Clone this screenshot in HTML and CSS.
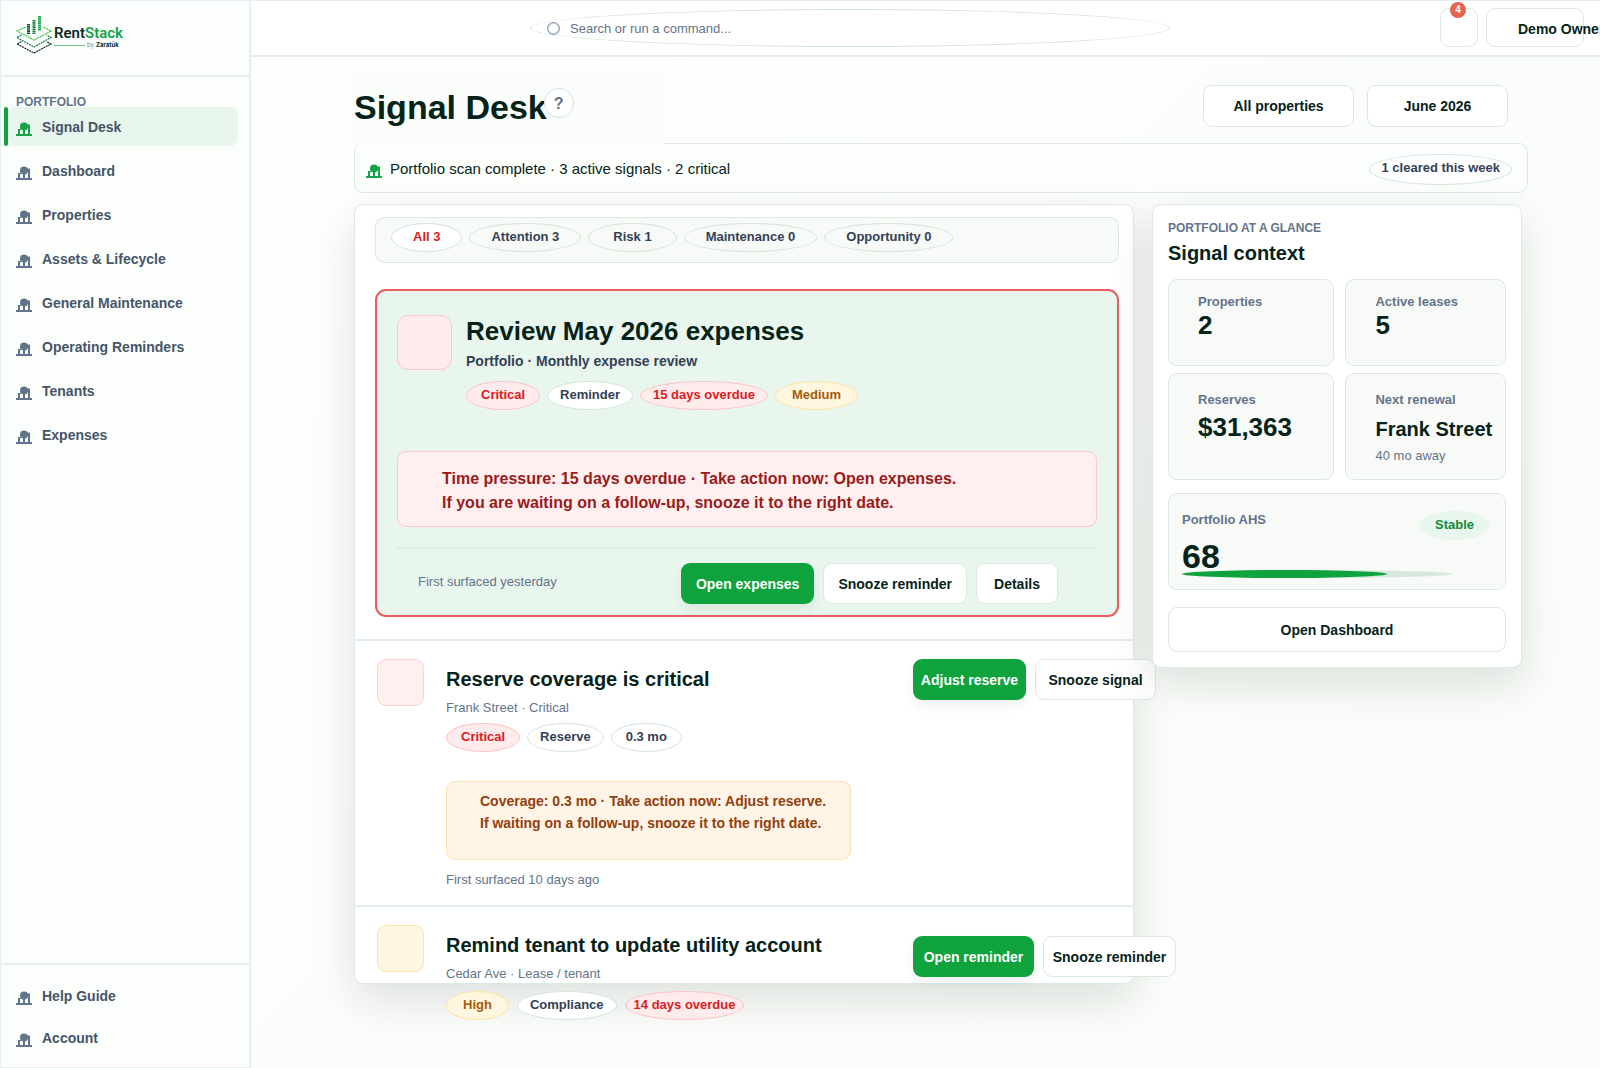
FILE: index.html
```html
<!DOCTYPE html>
<html lang="en">
<head>
<meta charset="utf-8">
<meta name="viewport" content="width=device-width, initial-scale=1">
<title>RentStack – Signal Desk</title>
<link rel="stylesheet" href="styles.css">
</head>
<body>
<svg class="defs" aria-hidden="true">
  <symbol id="home" viewBox="0 0 16 14">
    <path d="M0 12h16v2H0zM2 7h2v5H2zM11 2.500h3V12h-2V6h-1zM7 8h2v5H7z"/>
    <circle cx="8" cy="4.500" r="4"/>
    <path d="M3 7h2v1H3z"/>
  </symbol>
</svg>
<div class="app">
  <aside class="sidebar">
    <a class="brand" href="#">
      <svg class="brand-mark" width="36" height="38" viewBox="0 0 36 38" fill="none" stroke-width="1.200" aria-hidden="true">
        <g stroke-width="3" stroke-dasharray="1.600 .5">
          <path d="M12.500 8v10" stroke="#0b5a35"/><path d="M18 4v14" stroke="#15803d"/><path d="M23.500 0v15" stroke="#16a34a"/>
        </g>
        <g stroke-dasharray="2 .7">
          <path d="M9.500 11L1 15l17 9L35 15l-8-4" stroke="#3fc04a"/>
          <path d="M5.500 19L1 21.500 18 31l17-9.500L30.500 19" stroke="#1c7a4b"/>
          <path d="M5.500 25.500L1 28l17 9 17-9-4.500-2.500" stroke="#10302a"/>
        </g>
      </svg>
      <span class="brand-text">
        <span class="brand-name">Rent<b>Stack</b></span>
        <span class="brand-by"><i></i>by <b>Zaratük</b></span>
      </span>
    </a>
    <nav class="nav" aria-label="Portfolio">
      <h2 class="eyebrow nav-title">PORTFOLIO</h2>
      <a class="nav-item active" href="#"><svg class="home"><use href="#home"/></svg>Signal Desk</a>
      <a class="nav-item" href="#"><svg class="home"><use href="#home"/></svg>Dashboard</a>
      <a class="nav-item" href="#"><svg class="home"><use href="#home"/></svg>Properties</a>
      <a class="nav-item" href="#"><svg class="home"><use href="#home"/></svg>Assets &amp; Lifecycle</a>
      <a class="nav-item" href="#"><svg class="home"><use href="#home"/></svg>General Maintenance</a>
      <a class="nav-item" href="#"><svg class="home"><use href="#home"/></svg>Operating Reminders</a>
      <a class="nav-item" href="#"><svg class="home"><use href="#home"/></svg>Tenants</a>
      <a class="nav-item" href="#"><svg class="home"><use href="#home"/></svg>Expenses</a>
    </nav>
    <nav class="nav nav-foot" aria-label="Support">
      <a class="nav-item" href="#"><svg class="home"><use href="#home"/></svg>Help Guide</a>
      <a class="nav-item" href="#"><svg class="home"><use href="#home"/></svg>Account</a>
    </nav>
  </aside>

  <div class="page">
    <header class="topbar">
      <label class="search"><span class="search-icon"></span><input type="search" placeholder="Search or run a command..." aria-label="Search or run a command"></label>
      <div class="top-actions">
        <button class="btn bell" aria-label="Notifications"><span class="badge">4</span></button>
        <button class="btn user">Demo Owner</button>
      </div>
    </header>

    <main class="content">
      <div class="heading">
        <div class="title-block"><h1>Signal Desk</h1><button class="help" aria-label="Help">?</button></div>
        <div class="filters-top">
          <button class="btn btn-property">All properties</button>
          <button class="btn btn-month">June 2026</button>
        </div>
      </div>

      <section class="status">
        <svg class="home green"><use href="#home"/></svg>
        <p>Portfolio scan complete · 3 active signals · 2 critical</p>
        <span class="pill pill-cleared">1 cleared this week</span>
      </section>

      <div class="columns">
        <section class="card feed">
          <div class="filter-bar">
            <button class="pill filter selected">All 3</button>
            <button class="pill filter">Attention 3</button>
            <button class="pill filter filter-roomy">Risk 1</button>
            <button class="pill filter">Maintenance 0</button>
            <button class="pill filter">Opportunity 0</button>
          </div>

          <article class="hero">
            <div class="hero-head">
              <div class="tile-icon tile-lg red"></div>
              <div>
                <h2>Review May 2026 expenses</h2>
                <p class="hero-sub">Portfolio · Monthly expense review</p>
                <div class="tags">
                  <span class="pill red">Critical</span><span class="pill pill-snug">Reminder</span><span class="pill red pill-snug">15 days overdue</span><span class="pill amber pill-roomy">Medium</span>
                </div>
              </div>
            </div>
            <p class="alert alert-red">Time pressure: 15 days overdue · Take action now: Open expenses.<br>If you are waiting on a follow-up, snooze it to the right date.</p>
            <footer class="hero-foot">
              <span class="muted">First surfaced yesterday</span>
              <div class="actions">
                <button class="btn primary">Open expenses</button>
                <button class="btn">Snooze reminder</button>
                <button class="btn btn-details">Details</button>
              </div>
            </footer>
          </article>

          <article class="row">
            <div class="tile-icon"></div>
            <div class="row-body">
              <h3>Reserve coverage is critical</h3>
              <p class="muted row-sub">Frank Street · Critical</p>
              <div class="tags">
                <span class="pill red">Critical</span><span class="pill pill-snug">Reserve</span><span class="pill">0.3 mo</span>
              </div>
              <p class="alert alert-amber">Coverage: 0.3 mo · Take action now: Adjust reserve.<br>If waiting on a follow-up, snooze it to the right date.</p>
              <p class="muted row-time">First surfaced 10 days ago</p>
            </div>
            <div class="actions">
              <button class="btn primary btn-adjust">Adjust reserve</button>
              <button class="btn btn-signal">Snooze signal</button>
            </div>
          </article>

          <article class="row row-last">
            <div class="tile-icon amber"></div>
            <div class="row-body">
              <h3>Remind tenant to update utility account</h3>
              <p class="muted row-sub">Cedar Ave · Lease / tenant</p>
              <div class="tags">
                <span class="pill amber pill-roomy">High</span><span class="pill pill-snug">Compliance</span><span class="pill red pill-tight">14 days overdue</span>
              </div>
            </div>
            <div class="actions">
              <button class="btn primary btn-open">Open reminder</button>
              <button class="btn btn-remind">Snooze reminder</button>
            </div>
          </article>
        </section>

        <aside class="card glance">
          <p class="eyebrow">PORTFOLIO AT A GLANCE</p>
          <h3>Signal context</h3>
          <div class="stats">
            <div class="stat"><span class="label">Properties</span><strong>2</strong></div>
            <div class="stat"><span class="label">Active leases</span><strong>5</strong></div>
            <div class="stat stat-tall"><span class="label">Reserves</span><strong>$31,363</strong></div>
            <div class="stat stat-tall"><span class="label">Next renewal</span><strong class="place">Frank Street</strong><span class="muted">40 mo away</span></div>
          </div>
          <div class="ahs">
            <div class="ahs-head"><span class="label">Portfolio AHS</span><span class="pill stable">Stable</span></div>
            <strong>68</strong>
            <div class="meter"><div class="meter-fill" style="width:76%"></div></div>
          </div>
          <button class="btn btn-dashboard">Open Dashboard</button>
        </aside>
      </div>
    </main>
  </div>
</div>
</body>
</html>
```
FILE: styles.css
```css
:root {
  --line: #e6f0ea;
  --edge: #dbeae1;
  --oval: #d3e6da;
  --ink: #06231a;
  --slate: #334155;
  --muted: #64748b;
  --green: #0fa33e;
}
* { box-sizing: border-box; }
body, h1, h2, h3, p { margin: 0; }
body {
  font: 14px/20px "Liberation Sans", Arial, sans-serif;
  color: var(--ink);
  background: linear-gradient(135deg, #fefdff 20%, #fafdf9 70%, #f9fcf8);
}
a { color: inherit; text-decoration: none; }
button, input { font: inherit; color: inherit; }
.defs { position: absolute; width: 0; height: 0; }
.app { display: grid; grid-template-columns: 251px minmax(0, 1fr); min-height: 100vh; }

/* Sidebar */
.sidebar {
  display: flex; flex-direction: column;
  background: #fbfefb;
  border: 1px solid var(--line); border-right-width: 2px;
}
.brand {
  display: flex; gap: 2px; height: 76px;
  padding: 15px 0 0 15px;
  border-bottom: 2px solid var(--line);
}
.brand-text { padding-top: 7px; }
.brand-name { display: block; font: 600 15px/20px Roboto, sans-serif; color: #0b2a22; }
.brand-name b { font-weight: 600; color: #16a34a; }
.brand-by { display: flex; align-items: center; gap: 2px; margin-top: -2px; font: 6px/8px Inter, sans-serif; color: #7c8b96; }
.brand-by i { width: 31px; height: 1px; background: #6cc48a; }
.brand-by b { color: #0b2a22; }
.eyebrow { font-size: 12px; line-height: 14px; font-weight: 700; color: var(--muted); }
.nav { display: grid; gap: 5px; padding: 0 11px 0 7px; }
.nav-title { margin: 18px 0 -7px 8px; }
.nav-item {
  position: relative;
  display: flex; align-items: center; gap: 10px;
  height: 39px; padding: 1px 8px 0;
  border-radius: 8px;
  font-weight: 700; color: #475569;
}
.nav-item.active { background: #e9f6ed; }
.nav-item.active::before {
  content: ""; position: absolute; left: -4px; top: 0; bottom: 0;
  width: 4px; border-radius: 2px; background: var(--green);
}
.home { width: 16px; height: 14px; margin-top: 4px; fill: #64748b; }
.active .home, .home.green { fill: #16a34a; }
.nav-foot { margin-top: auto; gap: 3px; padding-top: 11px; padding-bottom: 10px; border-top: 2px solid var(--line); }

/* Top bar */
.topbar {
  display: flex; justify-content: space-between; gap: 16px;
  height: 57px; padding: 7px 16px 0 279px; overflow: hidden;
  background: #fff;
  border-top: 1px solid var(--line); border-bottom: 2px solid var(--line);
}
.search {
  flex: 0 1 640px; display: flex; align-items: center; gap: 10px;
  height: 38px; margin-top: 1px; padding-left: 16px;
  border: 1px solid var(--oval); border-radius: 50%;
}
.search-icon { width: 13px; height: 13px; border: 1px solid #7d8bab; border-radius: 50%; outline: 1px solid #c3cad9; outline-offset: -2px; }
.search input { flex: 1; border: 0; padding: 2px 0 0; background: none; outline: 0; font-size: 13px; }
.search input::placeholder { color: var(--muted); opacity: 1; }
.top-actions { display: flex; gap: 8px; }

.btn {
  height: 41px; padding: 0 14px;
  background: #fff; border: 1px solid var(--edge); border-radius: 9px;
  font-weight: 700; white-space: nowrap; cursor: pointer;
}
.btn.primary {
  padding: 0 15px; border: 0;
  background: var(--green); color: #fff;
  box-shadow: 0 6px 12px rgba(10, 40, 25, .06);
}
.top-actions .btn { height: 39px; }
.bell { position: relative; width: 38px; padding: 0; }
.badge {
  position: absolute; left: 9px; top: -7px;
  width: 16px; height: 16px; border-radius: 50%;
  background: #e5644e; color: #fff; font-size: 10px; line-height: 16px;
}
.user { width: 98px; padding: 2px 0 0 31px; text-align: left; }

/* Page head */
.content { padding: 15px 72px 0 103px; }
.heading { display: flex; justify-content: space-between; padding-right: 20px; }
.title-block {
  position: relative; z-index: 1;
  display: flex; align-items: flex-start;
  width: 310px; height: 74px; padding-top: 15px;
  background: #fbfdfb;
}
h1 { font-size: 34px; line-height: 40px; }
.help {
  width: 30px; height: 30px; margin: 1px 0 0 -3px; padding: 2px 0 0;
  border: 1px solid var(--oval); border-radius: 50%;
  background: #fff; color: var(--muted); font-size: 16px; font-weight: 700;
}
.filters-top { display: flex; gap: 13px; padding-top: 13px; }
.filters-top .btn { height: 42px; }
.btn-property { width: 151px; }
.btn-month { width: 141px; }
.status {
  display: flex; align-items: center; gap: 8px;
  height: 50px; margin-top: -3px; padding: 2px 15px 0 11px;
  background: #fbfefb; border: 1px solid var(--edge); border-radius: 9px;
}
.status p { flex: 1; font-size: 15px; }

.pill {
  display: inline-block; height: 29px; padding: 0 14px;
  border: 1px solid var(--oval); border-radius: 50%;
  background: #fff; color: var(--slate);
  font-size: 13px; line-height: 26px; font-weight: 700; white-space: nowrap;
}
.pill-cleared { height: 31px; padding: 0 11px; }
.pill.red { background: #ffebec; border-color: #fbc4c6; color: #dc1c24; }
.pill.amber { background: #fff6e0; border-color: #fde4a8; color: #a85c08; }
.pill.pill-roomy { padding: 0 16px; }
.pill.pill-snug { padding: 0 12px; }
.pill.pill-tight { padding: 0 8px; }
.pill.stable { padding: 0 15px; border-color: #e9f6ed; background: #e9f6ed; color: #118a3a; }
.tags { display: flex; gap: 7px; }

/* Feed */
.columns {
  display: grid; grid-template-columns: minmax(0, 1fr) 370px; gap: 18px;
  align-items: start; padding-right: 6px; margin-top: 11px;
}
.card {
  background: #fff; border: 1px solid var(--edge); border-radius: 9px;
  box-shadow: 0 16px 44px rgba(10, 25, 18, .12);
}
.feed { padding-top: 12px; }
.filter-bar {
  display: flex; gap: 7px; height: 46px;
  margin: 0 14px 26px 20px; padding: 5px 15px;
  background: #f8faf8; border: 1px solid var(--edge); border-radius: 9px;
}
.filter { padding: 0 21px 2px; background: none; cursor: pointer; }
.filter-roomy { padding: 0 24px 2px; }
.filter.selected { background: #fff; color: #dc1c24; }
.hero {
  margin: 0 14px 22px 20px; padding: 24px 20px 11px;
  background: #e9f6ed; border: 2px solid #e85d5f; border-radius: 11px;
}
.hero-head { display: flex; gap: 14px; }
.tile-icon { width: 47px; height: 47px; border: 1px solid #fdd0d2; border-radius: 9px; background: #ffefef; }
.tile-lg { width: 55px; height: 55px; border-radius: 11px; }
.tile-icon.red { background: #ffebec; border-color: #fbc8ca; }
.tile-icon.amber { background: #fff6e0; border-color: #fde2aa; }
.hero h2 { font-size: 26px; line-height: 32px; }
.hero-sub { margin: 4px 0 10px; font-weight: 700; color: var(--slate); }
.alert { border: 1px solid; border-radius: 9px; font-weight: 700; }
.alert-red {
  margin-top: 41px; padding: 15px 44px 11px;
  background: #fff0ef; border-color: #fbc8ca; color: #991b1b;
  font-size: 16px; line-height: 24px;
}
.muted { font-size: 13px; color: var(--muted); }
.hero-foot {
  display: flex; justify-content: space-between; align-items: center;
  margin-top: 20px; padding: 14px 39px 0 21px;
  border-top: 2px solid #deeee4;
}
.hero-foot .muted { padding-bottom: 4px; }
.actions { display: flex; gap: 9px; }
.btn-details { width: 82px; }
.row {
  display: grid; grid-template-columns: 47px minmax(0, 1fr) 220px;
  column-gap: 22px;
  padding: 18px 0 15px 22px; border-top: 2px solid var(--line);
}
.row .btn { padding: 0; flex-shrink: 0; }
.row-body { padding-top: 7px; }
h3 { font-size: 20px; line-height: 26px; }
.row-sub { margin: 6px 0 5px; }
.alert-amber {
  width: 405px; margin: 29px 0 10px; padding: 8px 0 25px 33px;
  background: #fff4e6; border-color: #fde2b4; color: #92400e;
  font-size: 14px; line-height: 22px;
}
.btn-adjust { width: 113px; }
.btn-signal { width: 121px; }
.btn-open { width: 121px; }
.btn-remind { width: 133px; }
/* The last row's tags hang below the card edge */
.row-last { margin-bottom: -37px; padding-bottom: 0; }
.row-last .row-sub { margin-bottom: 7px; }
.row-last .tags { gap: 8px; }
.row-last .actions { padding-top: 11px; }

/* Glance */
.glance { position: relative; z-index: 1; padding: 16px 15px 15px; }
.glance h3 { margin: 5px 0 13px; }
.stats { display: grid; grid-template-columns: 167fr 161fr; gap: 7px 11px; }
.stat, .ahs { background: #f8faf8; border: 1px solid var(--edge); border-radius: 9px; }
.stat { display: flex; flex-direction: column; min-height: 87px; padding: 12px 0 0 29px; }
.label { font-size: 13px; font-weight: 700; color: var(--muted); }
.stat strong { font-size: 26px; line-height: 26px; }
.stat-tall { min-height: 107px; padding-top: 16px; }
.stat-tall strong { margin-top: 4px; }
.stat strong.place { margin: 6px 0 4px; font-size: 20px; }
.ahs { height: 97px; margin: 13px 0 17px; padding: 16px 15px 0 13px; }
.ahs-head { display: flex; justify-content: space-between; height: 32px; }
.ahs-head .pill { margin-top: 1px; }
.ahs strong { display: block; font-size: 34px; line-height: 28px; }
.meter { width: 270px; height: 8px; border-radius: 50%; background: #d8e8de; }
.meter-fill { height: 8px; border-radius: 50%; background: var(--green); }
.btn-dashboard { width: 100%; height: 45px; }
```
